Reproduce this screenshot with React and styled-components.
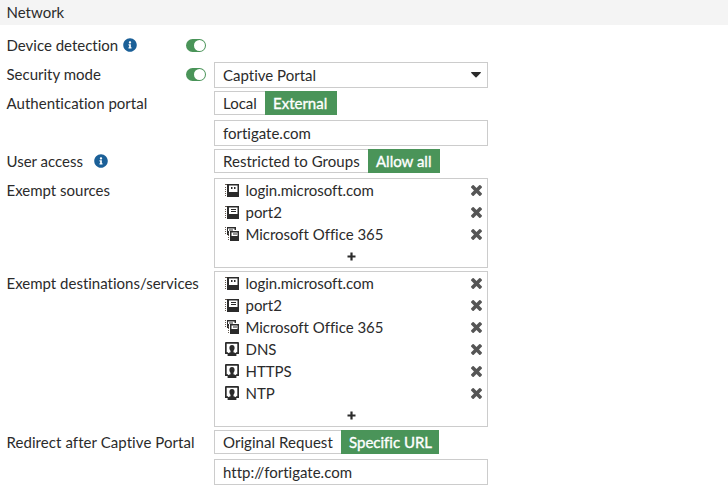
import React from "react";
import styled, { createGlobalStyle } from "styled-components";
import { FaInfoCircle } from "react-icons/fa";

const GlobalStyle = createGlobalStyle`
  * { box-sizing: border-box; }
  body {
    margin: 0;
    background: #fff;
    color: #2b2b2b;
    font: 15px/22px Lato, "Liberation Sans", sans-serif;
    font-variant-ligatures: none;
  }
`;

const Page = styled.main`
  width: 728px;
  height: 497px;
  overflow: hidden;
`;

const SectionTitle = styled.h2`
  margin: 0;
  height: 25px;
  padding-left: 6.5px;
  background: #f4f4f4;
  font-size: 15px;
  font-weight: 400;
  line-height: 25px;
`;

const Form = styled.div`
  display: flex;
  flex-direction: column;
  padding: 8px 0 0 6px;
`;

const Row = styled.div`
  display: grid;
  grid-template-columns: 180px 28px 274px;
  align-items: start;
  margin-bottom: ${(p) => p.$gap ?? 3}px;
`;

const Label = styled.div`
  display: flex;
  align-items: center;
  height: ${(p) => p.$height ?? 24}px;
  padding-left: 0.5px;
  letter-spacing: ${(p) => p.$tracking ?? 0}px;
  white-space: nowrap;
`;

const LabelText = styled.span`
  width: ${(p) => p.$width}px;
`;

const InfoIcon = styled(FaInfoCircle)`
  width: 14px;
  height: 14px;
  flex: none;
  color: #1b6098;
`;

const Switch = styled.span`
  display: flex;
  justify-content: flex-end;
  width: 20px;
  height: 13px;
  margin-top: 6px;
  padding: 1px;
  border-radius: 7px;
  background: #4a9459;

  &::after {
    content: "";
    width: 11px;
    height: 11px;
    border-radius: 50%;
    background: #fff;
  }
`;

const Field = styled.div`
  display: flex;
  align-items: center;
  justify-content: space-between;
  grid-column: 3;
  height: 26px;
  padding: 0 6px 0 8px;
  border: 1px solid #ccc;
  background: #fff;
`;

const Segments = styled.div`
  display: flex;
  grid-column: 3;
  height: 24px;
`;

const Segment = styled.div`
  width: ${(p) => p.$width}px;
  padding-left: ${(p) => (p.$active ? 7 : 8)}px;
  border: 1px solid ${(p) => (p.$active ? "#4a9459" : "#ccc")};
  border-right-width: ${(p) => (p.$active ? 1 : 0)}px;
  background: ${(p) => (p.$active ? "#4a9459" : "#fff")};
  color: ${(p) => (p.$active ? "#fff" : "inherit")};
  -webkit-text-stroke: ${(p) => (p.$active ? "0.35px #fff" : "0")};
  letter-spacing: ${(p) => p.$tracking ?? 0}px;
  white-space: nowrap;
`;

const List = styled.div`
  grid-column: 3;
  border: 1px solid #ccc;
`;

const Item = styled.div`
  display: grid;
  grid-template-columns: 20.5px 1fr 12px;
  align-items: center;
  height: 22px;
  padding: 0 4px 0 10px;
`;

const ItemName = styled.span`
  letter-spacing: -0.03px;
`;

const AddRow = styled.div`
  display: flex;
  align-items: center;
  justify-content: center;
  height: 22px;
`;

const Icon = styled.svg`
  display: block;
`;

const bookSpine = "M0 0h2v1H0z M0 3h1v1H0z M0 5h1v1H0z M0 7h1v1H0z M0 9h1v1H0z M0 11h1v1H0z";

const HostIcon = () => (
  <Icon width="14" height="14" viewBox="0 -1 14 14" fill="#2b2b2b">
    <path d="M2 0h12v13H2z M4 1.5V8h8.5V1.5z" fillRule="evenodd" />
    <path d="M6 3h1.5v2H6z M9 3h1.5v2H9z" />
    <path d={bookSpine} fill="#665b50" />
  </Icon>
);

const AddressIcon = () => (
  <Icon width="14" height="14" viewBox="0 -1 14 14" fill="#2b2b2b">
    <path d="M2 0h12v13H2z M4 1.5V8h8.5V1.5z" fillRule="evenodd" />
    <path d="M6 3h5v1H6z M6 5h5v1H6z" />
    <path d={bookSpine} fill="#665b50" />
  </Icon>
);

const GroupIcon = () => (
  <Icon width="14" height="14" viewBox="0 0 14 14" fill="#2b2b2b">
    <path d="M2 0h9v3H9.5V1.5H3V4h1v4H2z" />
    <path d="M4 2.5h4v1H4z" />
    <path d="M5 4h9v10H5z M6.5 5.5V9h6V5.5z" fillRule="evenodd" />
    <path d="M8 6.5h4v1H8z" />
    <path d="M0 0h1v1H0z M0 2h1v1H0z M0 4h1v1H0z M0 6h1v1H0z M3 6h1v1H3z M3 8h1v1H3z M3 10h1v1H3z M3 12h1v1H3z" fill="#665b50" />
  </Icon>
);

const ServiceIcon = () => (
  <Icon width="14" height="14" viewBox="0 0 14 14" fill="#2b2b2b">
    <path d="M1 0h12q1 0 1 1v11h-3v-1.8h1.3V1.8H1.7v8.4H3V12H0V1q0-1 1-1z" />
    <path d="M7 3c1.8 0 2.6 1.2 2.6 2.8 0 1.3-.5 2.4-1.1 2.9v1.6l2.2.8q.7.3.7 1V14H2.6v-1.9q0-.7.7-1l2.2-.8V8.7c-.6-.5-1.1-1.6-1.1-2.9C4.4 4.2 5.2 3 7 3z" />
  </Icon>
);

const RemoveIcon = () => (
  <Icon width="11" height="11" viewBox="110 -1170 1188 1188">
    <path
      transform="scale(1 -1)"
      fill="#555"
      d="M1298 214q0 -40 -28 -68l-136 -136q-28 -28 -68 -28t-68 28l-294 294l-294 -294q-28 -28 -68 -28t-68 28l-136 136q-28 28 -28 68t28 68l294 294l-294 294q-28 28 -28 68t28 68l136 136q28 28 68 28t68 -28l294 -294l294 294q28 28 68 28t68 -28l136 -136q28 -28 28 -68t-28 -68l-294 -294l294 -294q28 -28 28 -68z"
    />
  </Icon>
);

const PlusIcon = () => (
  <Icon width="9" height="9" viewBox="0 0 9 9">
    <path d="M3.4 0.5h2.2v2.9h2.9v2.2H5.6v2.9H3.4V5.6H0.5V3.4h2.9z" fill="#2b2b2b" />
  </Icon>
);

const CaretIcon = () => (
  <Icon width="10" height="6" viewBox="0 0 10 6">
    <path d="M0.5 0h9q.8.1.2.9L5.5 5.3q-.5.4-1 0L.3.9Q-.3.1.5 0z" fill="#2b2b2b" />
  </Icon>
);

const icons = { host: HostIcon, address: AddressIcon, group: GroupIcon, service: ServiceIcon };

const sources = [
  ["host", "login.microsoft.com"],
  ["address", "port2"],
  ["group", "Microsoft Office 365"],
];

const destinations = [...sources, ["service", "DNS"], ["service", "HTTPS"], ["service", "NTP"]];

function EntryList({ entries }) {
  return (
    <List>
      {entries.map(([kind, name]) => {
        const Glyph = icons[kind];
        return (
          <Item key={name}>
            <Glyph />
            <ItemName>{name}</ItemName>
            <RemoveIcon />
          </Item>
        );
      })}
      <AddRow>
        <PlusIcon />
      </AddRow>
    </List>
  );
}

export default function App() {
  return (
    <Page>
      <GlobalStyle />
      <SectionTitle>Network</SectionTitle>
      <Form>
        <Row $gap={5}>
          <Label $height={24}>
            <LabelText $width={116}>Device detection</LabelText>
            <InfoIcon />
          </Label>
          <Switch />
        </Row>
        <Row>
          <Label $height={24}>Security mode</Label>
          <Switch />
          <Field>
            Captive Portal
            <CaretIcon />
          </Field>
        </Row>
        <Row $gap={5}>
          <Label $tracking={0.03}>Authentication portal</Label>
          <Segments>
            <Segment $width={51}>Local</Segment>
            <Segment $active $width={72}>External</Segment>
          </Segments>
        </Row>
        <Row>
          <Field>fortigate.com</Field>
        </Row>
        <Row $gap={5}>
          <Label>
            <LabelText $width={87}>User access</LabelText>
            <InfoIcon />
          </Label>
          <Segments>
            <Segment $width={154} $tracking={0.04}>Restricted to Groups</Segment>
            <Segment $active $width={72}>Allow all</Segment>
          </Segments>
        </Row>
        <Row>
          <Label>Exempt sources</Label>
          <EntryList entries={sources} />
        </Row>
        <Row>
          <Label>Exempt destinations/services</Label>
          <EntryList entries={destinations} />
        </Row>
        <Row $gap={5}>
          <Label $tracking={0.07}>Redirect after Captive Portal</Label>
          <Segments>
            <Segment $width={127} $tracking={0.06}>Original Request</Segment>
            <Segment $active $width={98}>Specific URL</Segment>
          </Segments>
        </Row>
        <Row>
          <Field>http://fortigate.com</Field>
        </Row>
      </Form>
    </Page>
  );
}
